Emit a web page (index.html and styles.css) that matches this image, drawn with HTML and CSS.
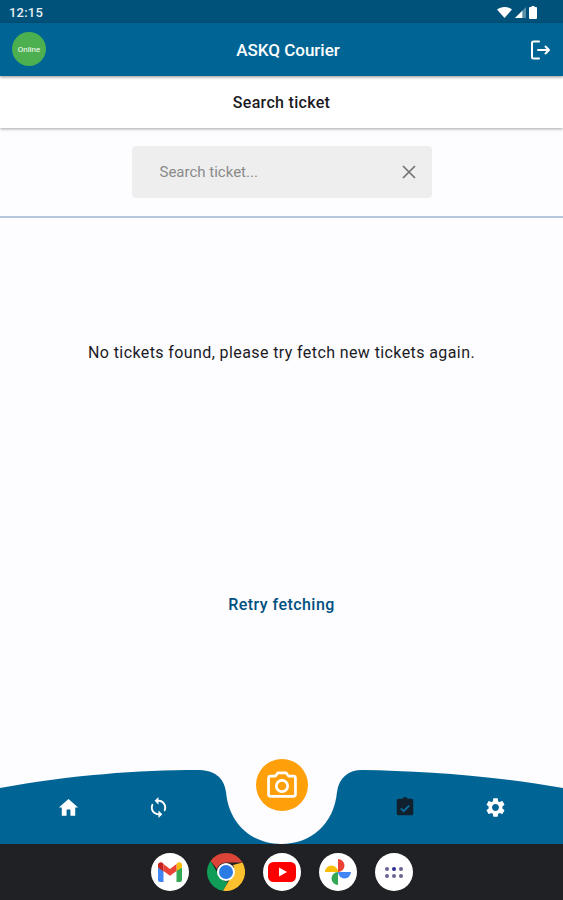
FILE: index.html
```html
<!DOCTYPE html>
<html lang="en">
<head>
    <meta charset="UTF-8">
    <meta name="viewport" content="width=device-width, initial-scale=1.0">
    <title>ASKQ Courier</title>
    <link rel="stylesheet" href="styles.css">
</head>
<body>
    <div class="phone">
        <!-- Status bar -->
        <div class="status-bar">
            <span class="clock">12:15</span>
            <div class="status-icons">
                <svg width="15" height="11" viewBox="0 0 14 11" preserveAspectRatio="none"><path d="M0 2.600C2 .9 4.400 0 7 0s5 .9 7 2.600L7 11z" fill="#fff"/></svg>
                <svg width="11" height="11" viewBox="0 0 12 12"><path d="M12 0v12H0z" fill="#fff" opacity=".35"/><path d="M8 4v8H0z" fill="#fff"/></svg>
                <svg class="battery" width="8" height="13" viewBox="0 0 8 13"><path d="M2.500 0h3v1H7a1 1 0 0 1 1 1v10a1 1 0 0 1-1 1H1a1 1 0 0 1-1-1V2a1 1 0 0 1 1-1h1.500z" fill="#fff"/></svg>
            </div>
        </div>

        <!-- App bar -->
        <div class="app-bar">
            <div class="online-badge">Online</div>
            <div class="app-title">ASKQ Courier</div>
            <svg class="logout" width="24" height="24" viewBox="0 0 24 24" fill="none" stroke="#fff" stroke-width="2" stroke-linecap="round" stroke-linejoin="round">
                <path d="M11 3.500H5.500a1.500 1.500 0 0 0-1.500 1.500v14a1.500 1.500 0 0 0 1.500 1.500H11"/>
                <path d="M10 12h11M17.500 8.500 21 12l-3.500 3.500"/>
            </svg>
        </div>

        <div class="page-title">Search ticket</div>

        <div class="search-area">
            <div class="search-box">
                <span class="placeholder">Search ticket...</span>
                <svg width="14" height="14" viewBox="0 0 14 14" fill="none" stroke="#6f6f6f" stroke-width="1.600"><path d="M1 1l12 12M13 1 1 13"/></svg>
            </div>
        </div>

        <div class="content">
            <p class="empty-msg">No tickets found, please try fetch new tickets again.</p>
            <div class="retry">Retry fetching</div>
        </div>

        <!-- Bottom nav -->
        <div class="bottom-nav">
            <svg class="nav-shape" width="563" height="76" viewBox="0 0 563 76">
                <path d="M0 20C70 7 140 2 197 2C214 2 224 9 226 24C229 56 252 76 281 76C311 76 334 56 337 24C339 9 349 2 362 2C420 3 490 7 563 20V76H0z" fill="#006595"/>
            </svg>
            <div class="nav-group">
                <div class="nav-item">
                    <svg width="23" height="23" viewBox="0 0 24 24" fill="#fff"><path d="M10 20.500v-6.500h4v6.500h5V12h3L12 3 2 12h3v8.500z"/></svg>
                </div>
                <div class="nav-item">
                    <svg width="23" height="23" viewBox="0 0 24 24" fill="#fff"><path d="M12 4V1L8 5l4 4V6c3.310 0 6 2.690 6 6 0 1.010-.25 1.970-.7 2.800l1.460 1.460C19.540 15.030 20 13.570 20 12c0-4.420-3.580-8-8-8zm0 14c-3.310 0-6-2.690-6-6 0-1.010.25-1.970.7-2.800L5.240 7.740C4.460 8.970 4 10.430 4 12c0 4.420 3.580 8 8 8v3l4-4-4-4v3z"/></svg>
                </div>
            </div>
            <button class="camera-btn">
                <svg width="34" height="34" viewBox="0 0 24 24" fill="none" stroke="#fff" stroke-width="1.900" stroke-linejoin="round"><path d="M9 3.500h6l1.600 2.200H20a1.500 1.500 0 0 1 1.500 1.500v11.300a1.500 1.500 0 0 1-1.500 1.500H4a1.500 1.500 0 0 1-1.500-1.500V7.200A1.500 1.500 0 0 1 4 5.700h3.400z"/><circle cx="12" cy="12.700" r="4"/></svg>
            </button>
            <div class="nav-group">
                <div class="nav-item">
                    <svg width="22" height="22" viewBox="0 0 24 24"><path d="M19 3h-4.180C14.400 1.840 13.300 1 12 1s-2.400.84-2.820 2H5c-1.100 0-2 .9-2 2v14c0 1.100.9 2 2 2h14c1.100 0 2-.9 2-2V5c0-1.100-.9-2-2-2z" fill="#10202c"/><path d="M7.500 13.500l3 3 6-6" fill="none" stroke="#0a6da0" stroke-width="2"/></svg>
                </div>
                <div class="nav-item">
                    <svg width="23" height="23" viewBox="0 0 24 24" fill="#fff"><path d="M19.140 12.940c.04-.3.060-.61.060-.94 0-.32-.02-.64-.07-.94l2.030-1.580c.18-.14.23-.41.120-.61l-1.920-3.320c-.12-.22-.37-.29-.59-.22l-2.390.96c-.5-.38-1.030-.7-1.620-.94l-.36-2.540c-.04-.24-.24-.41-.48-.41h-3.840c-.24 0-.43.170-.47.410l-.36 2.540c-.59.24-1.130.57-1.620.94l-2.390-.96c-.22-.08-.47 0-.59.22L2.740 8.870c-.12.210-.08.470.12.610l2.030 1.580c-.05.3-.09.630-.09.940s.02.640.07.940l-2.030 1.580c-.18.140-.23.410-.12.610l1.920 3.320c.12.220.37.290.59.220l2.390-.96c.5.380 1.030.7 1.620.94l.36 2.540c.05.240.24.410.48.410h3.840c.24 0 .44-.17.470-.41l.36-2.540c.59-.24 1.130-.56 1.620-.94l2.390.96c.22.080.47 0 .59-.22l1.920-3.320c.12-.22.070-.47-.12-.61l-2.010-1.580zM12 15.600c-1.980 0-3.600-1.620-3.600-3.600s1.620-3.600 3.600-3.600 3.600 1.620 3.600 3.600-1.620 3.600-3.600 3.600z"/></svg>
                </div>
            </div>
        </div>

        <!-- Android dock -->
        <div class="dock">
            <div class="dock-app">
                <svg width="26" height="22" viewBox="0 0 26 22">
                    <path d="M1 6.500V19a2 2 0 0 0 2 2h3.500V9z" fill="#4285f4"/>
                    <path d="M25 6.500V19a2 2 0 0 1-2 2h-3.500V9z" fill="#34a853"/>
                    <path d="M19.500 3v7L25 6.500V4c0-2.500-2.800-3.500-4.500-2.300z" fill="#fbbc04"/>
                    <path d="M1 6.500 6.500 10.500V3L5.500 1.700C3.800.5 1 1.500 1 4z" fill="#c5221f"/>
                    <path d="M6.500 3 13 8l6.500-5v7L13 14.800 6.500 10z" fill="#ea4335"/>
                </svg>
            </div>
            <div class="dock-app dock-chrome">
                <svg width="38" height="38" viewBox="0 0 38 38">
                    <path d="M19 0a19 19 0 0 1 16.500 9.500H19a9.500 9.500 0 0 0-9 6.500L3.600 8A19 19 0 0 1 19 0z" fill="#db4437"/>
                    <path d="M3.600 8 12 22.500a9.500 9.500 0 0 0 9 6l-5 9.300A19 19 0 0 1 3.600 8z" fill="#0f9d58"/>
                    <path d="M35.500 9.500A19 19 0 0 1 16 37.800l8.300-14.300A9.500 9.500 0 0 0 26 12z" fill="#fbc02d"/>
                    <circle cx="19" cy="19" r="9" fill="#fff"/>
                    <circle cx="19" cy="19" r="7" fill="#2b7be4"/>
                </svg>
            </div>
            <div class="dock-app">
                <svg width="28" height="20" viewBox="0 0 28 20">
                    <rect width="28" height="20" rx="5.500" fill="#f00"/>
                    <path d="M11 5.500v9l8-4.500z" fill="#fff"/>
                </svg>
            </div>
            <div class="dock-app">
                <svg width="28" height="28" viewBox="0 0 28 28">
                    <path d="M14 14V1a6.500 6.500 0 0 1 0 13z" fill="#ea4335"/>
                    <path d="M14 14h13a6.500 6.500 0 0 1-13 0z" fill="#4285f4"/>
                    <path d="M14 14v13a6.500 6.500 0 0 1 0-13z" fill="#34a853"/>
                    <path d="M14 14H1a6.500 6.500 0 0 1 13 0z" fill="#fbbc04"/>
                </svg>
            </div>
            <div class="dock-app">
                <div class="app-grid">
                    <i></i><i class="dark"></i><i></i>
                    <i></i><i></i><i></i>
                </div>
            </div>
        </div>
    </div>
</body>
</html>
```

FILE: styles.css
```css
* { margin: 0; padding: 0; box-sizing: border-box; }
body { font-family: Roboto, "Liberation Sans", sans-serif; background: #fdfcff; }
.phone { width: 563px; height: 900px; display: flex; flex-direction: column; overflow: hidden; }

.status-bar { height: 23px; background: #00527a; color: #fff; display: flex; align-items: center; justify-content: space-between; padding: 1px 26px 0 9px; flex-shrink: 0; }
.clock { font-size: 13px; font-weight: 500; letter-spacing: 0.2px; color: #e6eef3; }
.status-icons { display: flex; align-items: center; gap: 3px; }

.app-bar { height: 53px; background: #006595; display: flex; align-items: center; justify-content: space-between; padding: 0 11px 0 12px; flex-shrink: 0; box-shadow: 0 1px 3px rgba(0,0,0,0.45); position: relative; z-index: 2; }
.online-badge { width: 34px; height: 34px; border-radius: 50%; background: #4caf50; color: #fff; font-size: 8px; display: flex; align-items: center; justify-content: center; margin-top: -1px; }
.app-title { color: #fff; font-size: 17px; font-weight: 500; margin-left: 2px; }

.page-title { height: 52px; background: #fff; display: flex; align-items: center; justify-content: center; font-size: 16px; font-weight: 500; letter-spacing: 0.3px; color: #1b1b1f; flex-shrink: 0; box-shadow: 0 1px 3px rgba(0,0,0,0.35); position: relative; z-index: 1; }

.search-area { height: 90px; border-bottom: 2px solid #b5c6dc; display: flex; justify-content: center; padding-top: 18px; flex-shrink: 0; }
.search-box { width: 300px; height: 52px; background: #eeeeee; border-radius: 4px; display: flex; align-items: center; justify-content: space-between; padding: 0 16px 0 28px; }
.placeholder { font-size: 15px; color: #8a8a8a; }

.content { flex: 1; display: flex; flex-direction: column; align-items: center; padding-top: 125px; }
.empty-msg { font-size: 16px; line-height: 20px; color: #1b1b1f; letter-spacing: 0.4px; }
.retry { margin-top: 232px; font-size: 16px; line-height: 20px; font-weight: 500; letter-spacing: 0.45px; color: #00507f; }

.bottom-nav { height: 76px; position: relative; display: flex; justify-content: space-between; padding: 0 23px; flex-shrink: 0; }
.nav-shape { position: absolute; left: 0; top: 0; }
.nav-group { display: flex; position: relative; }
.nav-item { width: 90px; height: 76px; display: flex; align-items: center; justify-content: center; padding-top: 2px; }
.camera-btn { position: absolute; left: 256px; top: -9px; width: 52px; height: 52px; border: none; border-radius: 50%; background: #ff9f0a; display: flex; align-items: center; justify-content: center; }

.dock { height: 56px; background: #202124; display: flex; align-items: center; justify-content: center; gap: 18px; flex-shrink: 0; }
.dock-app { width: 38px; height: 38px; border-radius: 50%; background: #fff; display: flex; align-items: center; justify-content: center; }
.dock-chrome { background: none; }
.app-grid { display: grid; grid-template-columns: repeat(3, 4px); gap: 3px; }
.app-grid i { width: 4px; height: 4px; border-radius: 50%; background: #6a6590; }
.app-grid i.dark { background: #2f2f8f; }
```
